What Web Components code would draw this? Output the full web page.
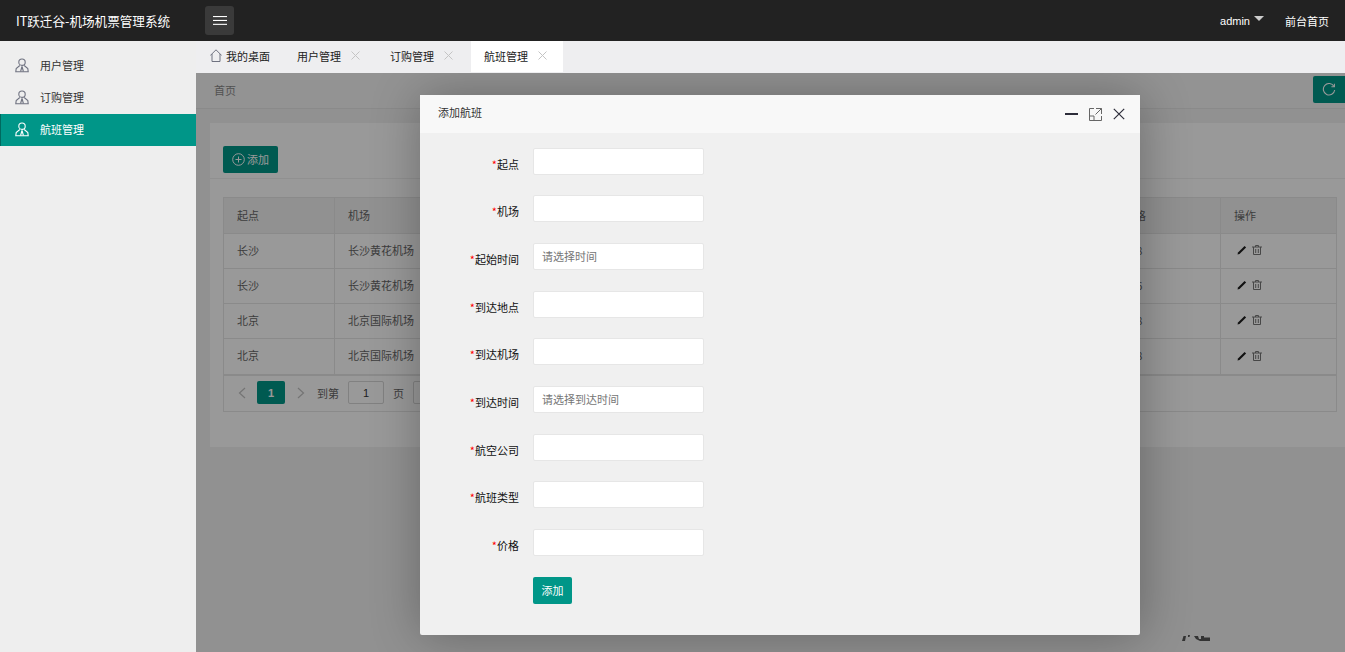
<!DOCTYPE html>
<html lang="zh">
<head>
<meta charset="utf-8">
<title>IT跃迁谷-机场机票管理系统</title>
<style>
  html, body { margin: 0; height: 100%; overflow: hidden; }
  body { font: 11px "Noto Sans CJK SC", "Liberation Sans", sans-serif; color: #333; }
</style>
</head>
<body>
<admin-app></admin-app>
<script>
const personIcon = `<svg width="14" height="15" viewBox="0 0 14 15" fill="none" stroke="currentColor" stroke-width="1.1">
  <circle cx="7" cy="4.2" r="3.2"/>
  <path d="M4.8 7.5 L1.2 10.5 L.8 13.7 H13.2 L12.8 10.5 L9.2 7.5"/>
  <path d="M7 8.5 L5.6 13.5 M7 8.5 L8.4 13.5"/>
</svg>`;

const closeIcon = `<svg width="9" height="9" viewBox="0 0 9 9" stroke="#c4c4c4" stroke-width="1" fill="none"><path d="M.5 .5 L8.5 8.5 M8.5 .5 L.5 8.5"/></svg>`;

class AppHeader extends HTMLElement {
  constructor() {
    super();
    this.attachShadow({ mode: "open" }).innerHTML = `
      <style>
        :host { display: flex; align-items: center; height: 41px; background: #222; color: #fff; }
        .brand { width: 205px; padding-left: 16px; box-sizing: border-box; font-size: 12.6px; white-space: nowrap; }
        .menu { display: flex; align-items: center; justify-content: center; width: 29px; height: 29px; background: #3a3a3a; border-radius: 3px; }
        .right { margin-left: auto; display: flex; align-items: center; padding-right: 16px; }
        .user { font-family: "Liberation Sans", sans-serif; font-size: 11px; }
        .caret { width: 0; height: 0; margin: -5px 21px 0 4px; border: 5.5px solid transparent; border-top: 5.5px solid #ccc; border-bottom: 0; }
      </style>
      <div class="brand">IT跃迁谷-机场机票管理系统</div>
      <div class="menu">
        <svg width="14" height="9" viewBox="0 0 14 9" fill="#fff"><rect y="0" width="14" height="1.1"/><rect y="3.9" width="14" height="1.1"/><rect y="7.8" width="14" height="1.1"/></svg>
      </div>
      <div class="right">
        <span class="user">admin</span><span class="caret"></span><span>前台首页</span>
      </div>`;
  }
}
customElements.define("app-header", AppHeader);

class SideItem extends HTMLElement {
  constructor() {
    super();
    this.attachShadow({ mode: "open" }).innerHTML = `
      <style>
        :host { display: flex; align-items: center; height: 32px; gap: 11px; padding: 0 0 2px 15px; box-sizing: border-box; color: #333; }
        :host([active]) { background: #009688; color: #fff; box-shadow: inset 1px 0 0 #00695f; }
        svg { color: #6f7280; }
        :host([active]) svg { color: #fff; }
      </style>
      ${personIcon}<slot></slot>`;
  }
}
customElements.define("side-item", SideItem);

class AppSidebar extends HTMLElement {
  constructor() {
    super();
    this.attachShadow({ mode: "open" }).innerHTML = `
      <style>
        :host { display: block; width: 196px; flex: none; padding-top: 9px; box-sizing: border-box; background: #eee; }
      </style>
      <slot></slot>`;
  }
}
customElements.define("app-sidebar", AppSidebar);

class TabItem extends HTMLElement {
  constructor() {
    super();
    this.attachShadow({ mode: "open" }).innerHTML = `
      <style>
        :host { display: flex; align-items: center; gap: 10px; padding: 0 17px 2px 13px; color: #222; }
        :host([active]) { background: #fff; margin-left: 1px; padding-right: 16px; }
        :host([home]) { gap: 4px; padding: 0 14px 2px 14px; }
        .x { display: flex; }
        :host([home]) .x { display: none; }
      </style>
      <slot name="icon"></slot><slot></slot><span class="x">${closeIcon}</span>`;
  }
}
customElements.define("tab-item", TabItem);

class TabBar extends HTMLElement {
  constructor() {
    super();
    this.attachShadow({ mode: "open" }).innerHTML = `
      <style>
        :host { display: flex; flex: none; height: 32px; padding-bottom: 1px; box-sizing: border-box; background: #eeeef0; }
      </style>
      <slot></slot>`;
  }
}
customElements.define("tab-bar", TabBar);

class DataTable extends HTMLElement {
  constructor() {
    super();
    const rows = [
      ["长沙", "长沙黄花机场", "888"],
      ["长沙", "长沙黄花机场", "886"],
      ["北京", "北京国际机场", "888"],
      ["北京", "北京国际机场", "888"],
    ];
    const pen = `<svg width="10" height="10" viewBox="0 0 10 10"><path d="M.5 9.5 L1 7.5 L7.6 .9 L9.1 2.4 L2.5 9 Z" fill="#1d1d1d"/></svg>`;
    const bin = `<svg width="10" height="10" viewBox="0 0 10 10" fill="none" stroke="#777" stroke-width="1"><path d="M0 2 H10 M3.5 2 V.5 H6.5 V2 M1.5 2 V9.5 H8.5 V2 M3.7 4 V8 M6.3 4 V8"/></svg>`;
    const cells = rows
      .map(([from, airport, price]) => `
        <div class="c">${from}</div><div class="c">${airport}</div><div class="c">${price}</div>
        <div class="c ops">${pen}${bin}</div>`)
      .join("");
    this.attachShadow({ mode: "open" }).innerHTML = `
      <style>
        :host { display: block; width: 1114px; color: #666; }
        .grid { display: grid; grid-template-columns: 111px 776px 110px 1fr; grid-auto-rows: 35px; grid-template-rows: 36px;
                border: 1px solid #e6e6e6; border-bottom-width: 2px; }
        .c { display: flex; align-items: center; padding: 0 0 3px 13px; border-right: 1px solid #e6e6e6; border-bottom: 1px solid #e6e6e6; }
        .c:nth-child(4n) { border-right: 0; }
        .c:nth-last-child(-n+4) { border-bottom: 0; }
        .h { background: #f2f2f2; padding-bottom: 2px; }
        .ops { gap: 5px; padding: 0 0 2px 16px; }
        .pager { display: flex; align-items: center; height: 36px; padding: 0 0 2px 14px; box-sizing: border-box; border: 1px solid #e6e6e6; border-top: 0; color: #666; }
        .cur { display: flex; align-items: center; justify-content: center; width: 28px; height: 23px; margin: 0 12px 0 11px; border-radius: 2px;
               background: #009688; color: #fff; font: bold 11px "Liberation Sans", sans-serif; }
        .box { display: flex; align-items: center; justify-content: center; height: 23px; box-sizing: border-box; border: 1px solid #d8d8d8; border-radius: 2px; background: #fff; }
        .page { width: 36px; margin: 0 9px; color: #333; font-family: "Liberation Sans", sans-serif; }
        .ok { width: 40px; margin-left: 9px; }
        .label { margin-left: 12px; }
      </style>
      <div class="grid">
        <div class="c h">起点</div><div class="c h">机场</div><div class="c h">价格</div><div class="c h">操作</div>
        ${cells}
      </div>
      <div class="pager">
        <svg width="8" height="12" viewBox="0 0 8 12" fill="none" stroke="#c2c2c2" stroke-width="1.2"><path d="M7 1 L1.5 6 L7 11"/></svg>
        <span class="cur">1</span>
        <svg width="8" height="12" viewBox="0 0 8 12" fill="none" stroke="#c2c2c2" stroke-width="1.2"><path d="M1 1 L6.5 6 L1 11"/></svg>
        <span class="label">到第</span><span class="box page">1</span><span>页</span><span class="box ok">确定</span>
      </div>`;
  }
}
customElements.define("data-table", DataTable);

class FlightPage extends HTMLElement {
  constructor() {
    super();
    this.attachShadow({ mode: "open" }).innerHTML = `
      <style>
        :host { display: block; height: 100%; background: #f2f2f2; overflow: hidden; }
        .crumb { position: relative; display: flex; align-items: center; height: 33px; padding: 0 0 2px 18px; background: #f5f5f5; border-bottom: 1px solid #e6e6e6; color: #888; }
        .refresh { position: absolute; right: 0; top: 3px; display: flex; align-items: center; justify-content: center; width: 32px; height: 27px;
                   background: #009688; border-radius: 2px 0 0 2px; }
        .card { width: 1149px; height: 324px; margin: 14px 0 0 14px; background: #fff; }
        .tools { height: 56px; padding: 23px 0 0 13px; box-sizing: border-box; border-bottom: 1px solid #f0f0f0; }
        .add { display: inline-flex; align-items: center; gap: 2px; height: 27px; padding: 0 9px 1px; box-sizing: border-box; border-radius: 2px; background: #009688; color: #fff; }
        data-table { margin: 18px 0 0 13px; }
      </style>
      <div class="crumb">首页
        <span class="refresh">
          <svg width="14" height="14" viewBox="0 0 14 14" fill="none" stroke="#fff" stroke-width="1.1"><path d="M12 3.4 A5.7 5.7 0 1 0 12.7 7"/><path d="M12.4 .8 V3.8 H9.4"/></svg>
        </span>
      </div>
      <div class="card">
        <div class="tools">
          <span class="add">
            <svg width="13" height="13" viewBox="0 0 13 13" fill="none" stroke="#fff" stroke-width="1"><circle cx="6.5" cy="6.5" r="5.8"/><path d="M3.5 6.5 H9.5 M6.5 3.5 V9.5"/></svg>
            添加
          </span>
        </div>
        <data-table></data-table>
      </div>`;
  }
}
customElements.define("flight-page", FlightPage);

class FormRow extends HTMLElement {
  constructor() {
    super();
    const label = this.getAttribute("label");
    const hint = this.getAttribute("hint") || "";
    this.attachShadow({ mode: "open" }).innerHTML = `
      <style>
        :host { display: flex; flex: none; height: 27px; }
        label { width: 99px; padding-top: 8px; text-align: right; color: #111; white-space: nowrap; box-sizing: border-box; }
        i { font-style: normal; color: #f00; }
        .field { display: flex; align-items: center; width: 171px; height: 27px; margin-left: 14px; padding: 0 0 2px 8px; box-sizing: border-box;
                 background: #fff; border: 1px solid #e6e6e6; border-radius: 2px; color: #757575; }
      </style>
      <label><i>*</i>${label}</label>
      <div class="field">${hint}</div>`;
  }
}
customElements.define("form-row", FormRow);

class ModalDialog extends HTMLElement {
  constructor() {
    super();
    this.attachShadow({ mode: "open" }).innerHTML = `
      <style>
        :host { position: absolute; left: 224px; top: 22px; width: 720px; height: 540px; background: #f0f0f0; box-shadow: 1px 1px 50px rgba(0,0,0,.3); border-radius: 2px; }
        .title { display: flex; align-items: center; height: 38px; padding: 0 15px 0 18px; background: #f8f8f8; color: #333; }
        .title span:first-child { margin-bottom: 4px; }
        .actions { margin-left: auto; display: flex; align-items: center; gap: 11px; }
        .body { display: flex; flex-direction: column; gap: 20.65px; padding-top: 14.8px; }
        .submit { display: flex; align-items: center; justify-content: center; width: 39px; height: 27px; margin-left: 113px; border-radius: 2px; background: #009688; color: #fff; }
      </style>
      <div class="title">
        <span>添加航班</span>
        <span class="actions">
          <svg width="13" height="2" viewBox="0 0 13 2"><rect width="13" height="2" fill="#2d2d3a"/></svg>
          <svg width="13" height="13" viewBox="0 0 13 13" fill="none" stroke="#666" stroke-width="1"><path d="M5 .5 H.5 V12.5 H12.5 V8 M.5 8 H5 V12.5 M7 .5 H12.5 V6 M12.5 .5 L6.5 6.5" /></svg>
          <svg width="12" height="12" viewBox="0 0 12 12" fill="none" stroke="#2d2d3a" stroke-width="1.2"><path d="M.8 .8 L11.2 11.2 M11.2 .8 L.8 11.2"/></svg>
        </span>
      </div>
      <div class="body">
        <slot></slot>
        <div class="submit">添加</div>
      </div>`;
  }
}
customElements.define("modal-dialog", ModalDialog);

class AdminApp extends HTMLElement {
  constructor() {
    super();
    const fields = [
      ["起点"], ["机场"], ["起始时间", "请选择时间"], ["到达地点"], ["到达机场"],
      ["到达时间", "请选择到达时间"], ["航空公司"], ["航班类型"], ["价格"],
    ];
    const rows = fields
      .map(([label, hint]) => `<form-row label="${label}"${hint ? ` hint="${hint}"` : ""}></form-row>`)
      .join("");
    this.attachShadow({ mode: "open" }).innerHTML = `
      <style>
        :host { display: flex; flex-direction: column; height: 652px; width: 1345px; }
        .main { display: flex; flex: 1; min-height: 0; }
        .content { display: flex; flex-direction: column; flex: 1; min-width: 0; }
        .stage { position: relative; flex: 1; min-height: 0; overflow: hidden; }
        .shade { position: absolute; inset: 0; background: rgba(0,0,0,.4); }
        .smudge { position: absolute; left: 985px; top: 561px; filter: blur(.6px); }
      </style>
      <app-header></app-header>
      <div class="main">
        <app-sidebar>
          <side-item>用户管理</side-item>
          <side-item>订购管理</side-item>
          <side-item active>航班管理</side-item>
        </app-sidebar>
        <div class="content">
          <tab-bar>
            <tab-item home>
              <svg slot="icon" width="12" height="13" viewBox="0 0 12 13" fill="none" stroke="#6f7280" stroke-width="1"><path d="M.3 6.5 L6 .8 L11.7 6.5 M2 5 V12.5 H10 V5"/></svg>
              我的桌面
            </tab-item>
            <tab-item>用户管理</tab-item>
            <tab-item>订购管理</tab-item>
            <tab-item active>航班管理</tab-item>
          </tab-bar>
          <div class="stage">
            <flight-page></flight-page>
            <div class="shade"></div>
            <modal-dialog>${rows}</modal-dialog>
            <svg class="smudge" width="30" height="9" viewBox="0 0 30 9" fill="#333"><path d="M1 7 L2.5 2 H5 L4 7 Z M7 1 H9 L8.5 3 H7 Z M13 2 H17 L18 5 H20 V2 H23 V3.5 H29 V7 H19 L15 5 Z"/></svg>
          </div>
        </div>
      </div>`;
  }
}
customElements.define("admin-app", AdminApp);
</script>
</body>
</html>
